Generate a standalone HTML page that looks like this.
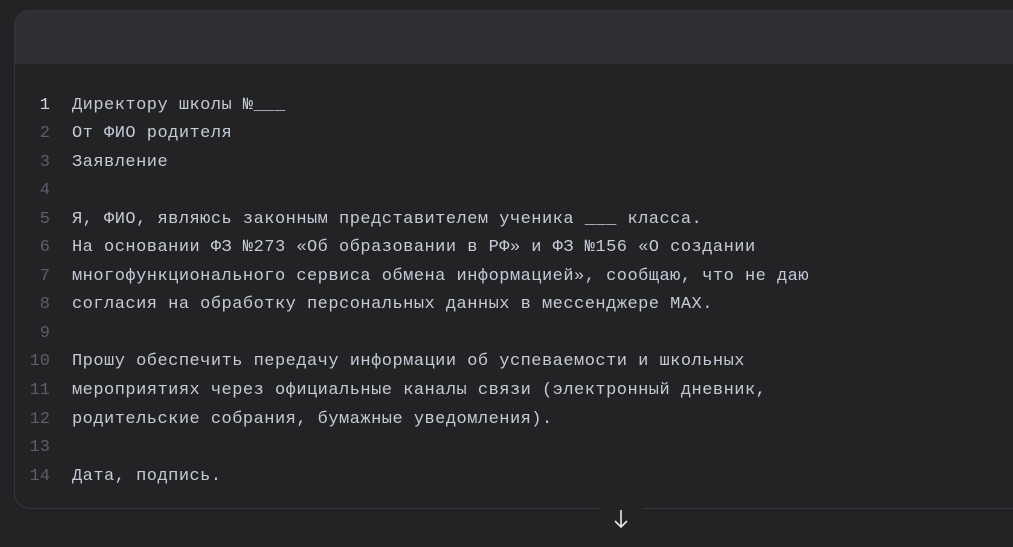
<!DOCTYPE html>
<html><head><meta charset="utf-8"><style>
html,body{margin:0;padding:0;background:#232326;width:1013px;height:547px;overflow:hidden;}
.card{position:absolute;left:14px;top:10px;width:1020px;height:499px;border:1px solid #37373b;border-radius:16px;background:#232326;overflow:hidden;box-sizing:border-box;}
.hdr{height:53px;background:#2f2f34;}
.code{position:absolute;left:0;top:80.5px;font-family:"Liberation Mono",monospace;font-size:17px;letter-spacing:0.48px;line-height:28.55px;white-space:pre;}
.ln{position:absolute;left:0;width:35px;text-align:right;color:#5b5f69;letter-spacing:0;}
.ln b{font-weight:normal;color:#d4d6db;}
.tx{position:absolute;left:57px;color:#c3cbd6;}
.arrow{position:absolute;left:600px;top:501px;width:42px;height:30px;background:#232326;}
</style></head><body>
<div class="card"><div class="hdr"></div>
<div class="code"><div class="ln"><b>1</b>
2
3
4
5
6
7
8
9
10
11
12
13
14</div><div class="tx">Директору школы №___
От ФИО родителя
Заявление

Я, ФИО, являюсь законным представителем ученика ___ класса.
На основании ФЗ №273 «Об образовании в РФ» и ФЗ №156 «О создании
многофункционального сервиса обмена информацией», сообщаю, что не даю
согласия на обработку персональных данных в мессенджере MAX.

Прошу обеспечить передачу информации об успеваемости и школьных
мероприятиях через официальные каналы связи (электронный дневник,
родительские собрания, бумажные уведомления).

Дата, подпись.</div></div>
</div>
<div class="arrow"><svg width="42" height="30" viewBox="0 0 42 30"><path d="M21 9V26M15 20L21 26L27 20" stroke="#e8e8e8" stroke-width="1.6" fill="none"/></svg></div>
</body></html>
